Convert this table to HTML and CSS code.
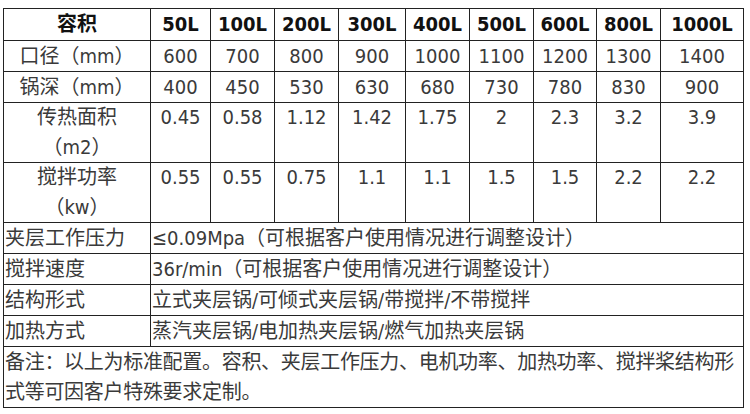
FILE: index.html
```html
<!DOCTYPE html>
<html lang="zh-CN">
<head>
<meta charset="UTF-8">
<meta name="viewport" content="width=device-width, initial-scale=1.0">
<link rel="stylesheet" href="styles.css">
<title>夹层锅参数</title>
</head>
<body>
<table class="spec">
  <colgroup>
    <col class="c-name">
    <col class="c-50"><col class="c-64"><col class="c-64"><col class="c-67">
    <col class="c-64"><col class="c-64"><col class="c-63"><col class="c-64">
    <col class="c-last">
  </colgroup>
  <tr class="head">
    <td>容积</td><td>50L</td><td>100L</td><td>200L</td><td>300L</td><td>400L</td><td>500L</td><td>600L</td><td>800L</td><td>1000L</td>
  </tr>
  <tr>
    <td>口径（mm）</td><td>600</td><td>700</td><td>800</td><td>900</td><td>1000</td><td>1100</td><td>1200</td><td>1300</td><td>1400</td>
  </tr>
  <tr>
    <td>锅深（mm）</td><td>400</td><td>450</td><td>530</td><td>630</td><td>680</td><td>730</td><td>780</td><td>830</td><td>900</td>
  </tr>
  <tr class="tall">
    <td>传热面积<br>（m2）</td><td>0.45</td><td>0.58</td><td>1.12</td><td>1.42</td><td>1.75</td><td>2</td><td>2.3</td><td>3.2</td><td>3.9</td>
  </tr>
  <tr class="tall">
    <td>搅拌功率<br>（kw）</td><td>0.55</td><td>0.55</td><td>0.75</td><td>1.1</td><td>1.1</td><td>1.5</td><td>1.5</td><td>2.2</td><td>2.2</td>
  </tr>
  <tr class="wide">
    <td>夹层工作压力</td><td colspan="9">≤0.09Mpa（可根据客户使用情况进行调整设计）</td>
  </tr>
  <tr class="wide">
    <td>搅拌速度</td><td colspan="9">36r/min（可根据客户使用情况进行调整设计）</td>
  </tr>
  <tr class="wide">
    <td>结构形式</td><td colspan="9">立式夹层锅/可倾式夹层锅/带搅拌/不带搅拌</td>
  </tr>
  <tr class="wide">
    <td>加热方式</td><td colspan="9">蒸汽夹层锅/电加热夹层锅/燃气加热夹层锅</td>
  </tr>
  <tr class="wide note">
    <td colspan="10">备注：以上为标准配置。容积、夹层工作压力、电机功率、加热功率、搅拌桨结构形<br>式等可因客户特殊要求定制。</td>
  </tr>
</table>
</body>
</html>
```

FILE: styles.css
```css
body {
  margin: 0;
  background: #fff;
  font-family: "DejaVu Sans Condensed", "Noto Sans CJK SC", sans-serif;
  font-size: 20px;
  color: #3a3a3a;
}
.spec {
  margin: 8px 0 0 3px;
  border-collapse: collapse;
  table-layout: fixed;
  width: 741px;
}
.c-name { width: 147px; }
.c-50 { width: 60px; }
.c-64 { width: 64px; }
.c-67 { width: 67px; }
.c-63 { width: 63px; }
.c-last { width: 83px; }
.spec td {
  border: 1px solid #222;
  padding: 0;
  height: 30px;
  line-height: 30px;
  text-align: center;
  vertical-align: top;
  white-space: nowrap;
}
.head td {
  font-weight: bold;
  color: #111;
  height: 31px;
}
.tall td {
  line-height: 29.5px;
}
.wide td {
  text-align: left;
  padding-left: 1px;
}
.note td {
  line-height: 30px;
  letter-spacing: -0.3px;
}
```
